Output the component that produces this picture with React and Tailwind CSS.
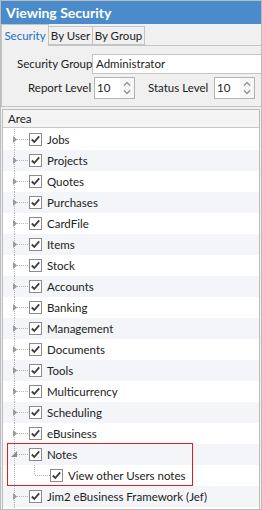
const areas = [
  'Jobs', 'Projects', 'Quotes', 'Purchases', 'CardFile', 'Items', 'Stock', 'Accounts',
  'Banking', 'Management', 'Documents', 'Tools', 'Multicurrency', 'Scheduling', 'eBusiness',
]

function Check() {
  return (
    <span className="flex h-[13px] w-[13px] shrink-0 items-center justify-center border border-[#8c8c8c] bg-white">
      <svg width="11" height="11" viewBox="0 0 11 11">
        <path d="M1.8 5.5 L4.3 8 L9.2 2.3" fill="none" stroke="#3c3c3c" strokeWidth="1.8" />
      </svg>
    </span>
  )
}

function Connector({ expanded }) {
  return (
    <svg width="26" height="21" viewBox="0 0 26 21" className="shrink-0">
      <line x1="11.5" y1="0" x2="11.5" y2="21" stroke="#b4b4b4" strokeDasharray="1 1" />
      <line x1="14" y1="10.5" x2="26" y2="10.5" stroke="#b4b4b4" strokeDasharray="1 1" />
      {expanded ? (
        <path d="M14 7 L14 13 L8 13 Z" fill="#8a8a8a" />
      ) : (
        <path d="M10 7 L14 10.5 L10 14 Z" fill="#9a9a9a" />
      )}
    </svg>
  )
}

function Row({ label, shaded, expanded }) {
  return (
    <div className={`flex h-[21px] items-center ${shaded ? 'bg-[#f3f5f9]' : 'bg-white'}`}>
      <Connector expanded={expanded} />
      <Check />
      <span className="ml-[5px] whitespace-nowrap text-[11.5px] text-[#222]">{label}</span>
    </div>
  )
}

function Spin({ value }) {
  return (
    <div className="flex h-[22px] w-[41px] shrink-0 items-center border border-[#b4b4b4] bg-white">
      <span className="ml-[2px] flex-1 text-[11.5px] text-[#222]">{value}</span>
      <svg width="14" height="20" viewBox="0 0 14 20" className="bg-[#f7f7f7]">
        <path d="M4 7.5 L7 4.5 L10 7.5" fill="none" stroke="#888" strokeWidth="1.2" />
        <path d="M4 12.5 L7 15.5 L10 12.5" fill="none" stroke="#888" strokeWidth="1.2" />
      </svg>
    </div>
  )
}

export default function App() {
  return (
    <div className="h-[510px] w-[262px] overflow-hidden border border-[#bcbcbc] bg-[#f0f0f0] font-['Lato',sans-serif]">
      <div className="flex h-[23px] items-center bg-[#4a8bcb] pl-[5px] text-[14px] font-bold text-white">
        Viewing Security
      </div>

      <div className="flex h-[21px] items-end whitespace-nowrap text-[11.5px]">
        <div className="relative z-10 -mb-px flex h-[22px] w-[48px] items-center justify-center border border-b-0 border-[#c4c4c4] bg-[#f0f0f0] text-[#1a6fc9]">
          Security
        </div>
        <div className="flex h-[19px] w-[44px] items-center justify-center border border-l-0 border-[#c4c4c4] text-[#222]">By User</div>
        <div className="flex h-[19px] w-[52px] items-center justify-center border border-l-0 border-[#c4c4c4] text-[#222]">By Group</div>
      </div>

      <div className="-mr-px flex h-[62px] flex-col whitespace-nowrap border border-[#c4c4c4] text-[11.5px] text-[#222]">
        <div className="mt-[8px] flex h-[20px] items-center">
          <span className="ml-[15px] w-[75px] shrink-0">Security Group</span>
          <div className="-mr-px flex h-[20px] flex-1 items-center border border-r-0 border-[#c4c4c4] bg-white pl-[3px]">
            Administrator
          </div>
        </div>
        <div className="mt-[3px] flex h-[22px] items-center">
          <span className="ml-[26px] w-[66px] shrink-0">Report Level</span>
          <Spin value="10" />
          <span className="ml-[13px] w-[66px] shrink-0">Status Level</span>
          <Spin value="10" />
        </div>
      </div>

      <div className="mx-[1px] mt-[2px] border border-[#bdbdbd] bg-white">
        <div className="flex h-[18px] items-center border-b border-[#c8c8c8] bg-[#f4f4f4] pl-[5px] text-[11.5px] text-[#222]">
          Area
        </div>
        <div className="pt-px">
          {areas.map((a, i) => (
            <Row key={a} label={a} shaded={i % 2 === 1} />
          ))}
          <div className="relative">
            <Row label="Notes" shaded expanded />
            <div className="flex h-[21px] items-center bg-white">
              <svg width="47" height="21" viewBox="0 0 47 21" className="shrink-0">
                <line x1="11.5" y1="0" x2="11.5" y2="21" stroke="#b4b4b4" strokeDasharray="1 1" />
                <line x1="31.5" y1="0" x2="31.5" y2="10" stroke="#b4b4b4" strokeDasharray="1 1" />
                <line x1="32" y1="10.5" x2="47" y2="10.5" stroke="#b4b4b4" strokeDasharray="1 1" />
              </svg>
              <Check />
              <span className="ml-[5px] whitespace-nowrap text-[11.5px] text-[#222]">View other Users notes</span>
            </div>
            <div className="absolute left-[4px] top-[-1px] h-[43px] w-[186px] border border-[#e01e1e]" />
          </div>
          <Row label="Jim2 eBusiness Framework (Jef)" shaded />
          <div className="h-[4px] bg-white">
            <svg width="26" height="4" viewBox="0 0 26 4">
              <line x1="11.5" y1="0" x2="11.5" y2="4" stroke="#b4b4b4" strokeDasharray="1 1" />
            </svg>
          </div>
        </div>
      </div>
    </div>
  )
}
